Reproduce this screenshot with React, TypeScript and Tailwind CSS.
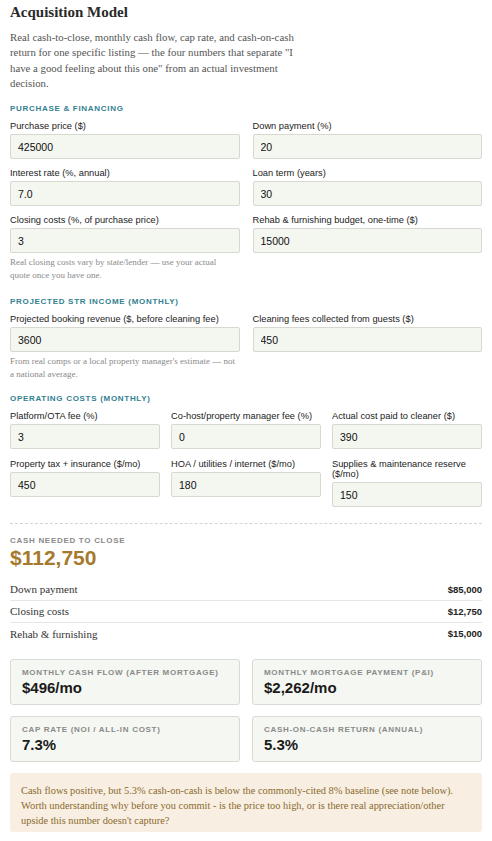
import { useState } from 'react'

const serif = 'font-["Liberation_Serif",serif]'
const sans = 'font-["Liberation_Sans",Arial,sans-serif]'

type Field = {
  label: string
  value: string
}

const financing: Field[] = [
  { label: 'Purchase price ($)', value: '425000' },
  { label: 'Down payment (%)', value: '20' },
  { label: 'Interest rate (%, annual)', value: '7.0' },
  { label: 'Loan term (years)', value: '30' },
  { label: 'Closing costs (%, of purchase price)', value: '3' },
  { label: 'Rehab & furnishing budget, one-time ($)', value: '15000' },
]

const income: Field[] = [
  { label: 'Projected booking revenue ($, before cleaning fee)', value: '3600' },
  { label: 'Cleaning fees collected from guests ($)', value: '450' },
]

const operating: Field[] = [
  { label: 'Platform/OTA fee (%)', value: '3' },
  { label: 'Co-host/property manager fee (%)', value: '0' },
  { label: 'Actual cost paid to cleaner ($)', value: '390' },
  { label: 'Property tax + insurance ($/mo)', value: '450' },
  { label: 'HOA / utilities / internet ($/mo)', value: '180' },
  { label: 'Supplies & maintenance reserve ($/mo)', value: '150' },
]

const breakdown = [
  { label: 'Down payment', value: '$85,000' },
  { label: 'Closing costs', value: '$12,750' },
  { label: 'Rehab & furnishing', value: '$15,000' },
]

const metrics = [
  { label: 'Monthly cash flow (after mortgage)', value: '$496/mo' },
  { label: 'Monthly mortgage payment (P&I)', value: '$2,262/mo' },
  { label: 'Cap rate (NOI / all-in cost)', value: '7.3%' },
  { label: 'Cash-on-cash return (annual)', value: '5.3%' },
]

function SectionTitle({ children }: { children: string }) {
  return (
    <h3 className={`${sans} text-[8px] leading-[10px] font-bold uppercase tracking-[0.7px] text-[#32818f]`}>
      {children}
    </h3>
  )
}

function Hint({ children, narrow }: { children: string; narrow?: boolean }) {
  return (
    <p className={`${serif} mt-[3px] text-[9px] leading-[13px] text-[#8a8a8a] ${narrow ? 'max-w-[222px]' : ''}`}>
      {children}
    </p>
  )
}

function NumberField({ field, hint, narrowHint }: { field: Field; hint?: string; narrowHint?: boolean }) {
  const [value, setValue] = useState(field.value)
  return (
    <label className="block">
      <span className={`${sans} block text-[9.3px] leading-[10px] text-[#222]`}>{field.label}</span>
      <input
        value={value}
        onChange={(e) => setValue(e.target.value)}
        className={`${sans} mt-[3px] block h-[25px] w-full rounded-[2px] border border-[#d5d9cf] bg-[#f4f6f0] px-[7px] text-[10.5px] text-[#111] outline-none`}
      />
      {hint && <Hint narrow={narrowHint}>{hint}</Hint>}
    </label>
  )
}

export default function App() {
  return (
    <div className="min-h-screen bg-white px-[10px] pt-[3px] pb-[8px]">
      <h1 className={`${serif} text-[15px] leading-[18px] font-bold text-[#2a2a2a]`}>Acquisition Model</h1>
      <p className={`${serif} mt-[9px] max-w-[303px] text-[10.8px] leading-[15.3px] text-[#555]`}>
        Real cash-to-close, monthly cash flow, cap rate, and cash-on-cash return for one specific listing — the
        four numbers that separate "I have a good feeling about this one" from an actual investment decision.
      </p>

      {/* Purchase & financing */}
      <section className="mt-[13px]">
        <SectionTitle>Purchase &amp; Financing</SectionTitle>
        <div className="mt-[7px] grid grid-cols-2 items-start gap-x-[13px] gap-y-[9px]">
          {financing.map((f, i) => (
            <NumberField
              key={f.label}
              field={f}
              narrowHint
              hint={i === 4 ? 'Real closing costs vary by state/lender — use your actual quote once you have one.' : undefined}
            />
          ))}
        </div>
      </section>

      {/* Projected income */}
      <section className="mt-[15px]">
        <SectionTitle>Projected STR Income (Monthly)</SectionTitle>
        <div className="mt-[7px] grid grid-cols-2 items-start gap-x-[13px]">
          {income.map((f, i) => (
            <NumberField
              key={f.label}
              field={f}
              hint={i === 0 ? "From real comps or a local property manager's estimate — not a national average." : undefined}
            />
          ))}
        </div>
      </section>

      {/* Operating costs */}
      <section className="mt-[13px]">
        <SectionTitle>Operating Costs (Monthly)</SectionTitle>
        <div className="mt-[7px] grid grid-cols-3 items-start gap-x-[11px] gap-y-[10px]">
          {operating.map((f) => (
            <NumberField key={f.label} field={f} />
          ))}
        </div>
      </section>

      {/* Results */}
      <div className="mt-[16px] border-t border-dashed border-[#d4d4d4] pt-[12px]">
        <div className={`${sans} text-[8px] leading-[10px] font-bold uppercase tracking-[0.7px] text-[#8a8a8a]`}>
          Cash needed to close
        </div>
        <div className={`${sans} text-[21px] leading-[24px] font-bold text-[#a67a2c]`}>$112,750</div>

        <div className="mt-[9px]">
          {breakdown.map((row, i) => (
            <div
              key={row.label}
              className={`flex items-center justify-between h-[22px] ${i < breakdown.length - 1 ? 'border-b border-[#e6e6e6]' : ''}`}
            >
              <span className={`${serif} text-[11px] text-[#333]`}>{row.label}</span>
              <span className={`${sans} text-[9.5px] font-bold text-[#222]`}>{row.value}</span>
            </div>
          ))}
        </div>

        <div className="mt-[14px] grid grid-cols-2 gap-x-[12px] gap-y-[11px]">
          {metrics.map((m) => (
            <div key={m.label} className="rounded-[3px] border border-[#d8dbd3] bg-[#f5f7f2] px-[11px] pt-[8px] pb-[7px]">
              <div className={`${sans} text-[8px] leading-[10px] font-bold uppercase tracking-[0.7px] text-[#8a8a8a]`}>
                {m.label}
              </div>
              <div className={`${sans} mt-[1px] text-[15px] leading-[18px] font-bold text-[#1a1a1a]`}>{m.value}</div>
            </div>
          ))}
        </div>

        <div className={`${serif} mt-[11px] rounded-[3px] bg-[#f8efe2] px-[11px] pt-[10px] pb-[4px] text-[10.4px] leading-[15px] text-[#8a6a2e]`}>
          Cash flows positive, but 5.3% cash-on-cash is below the commonly-cited 8% baseline (see note below). Worth
          understanding why before you commit - is the price too high, or is there real appreciation/other upside this
          number doesn't capture?
        </div>
      </div>
    </div>
  )
}
